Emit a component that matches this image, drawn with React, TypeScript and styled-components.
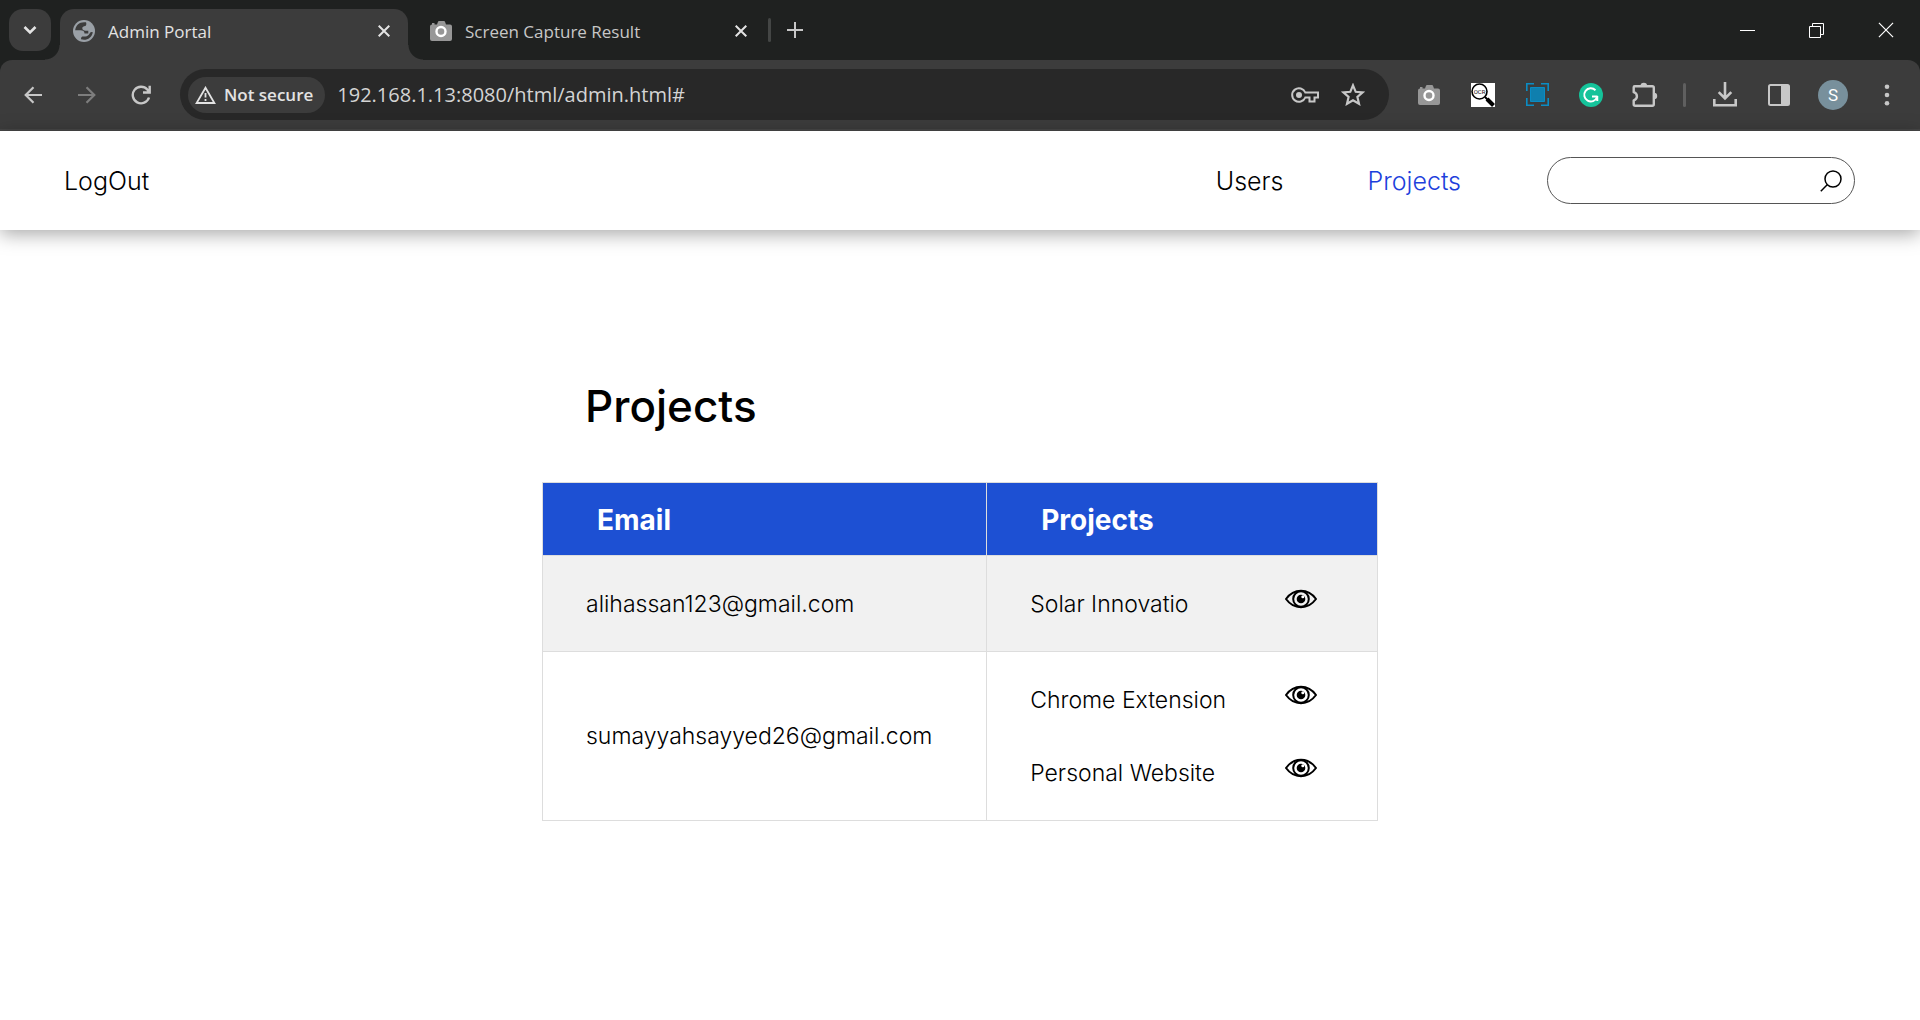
import React from "react";
import styled, { createGlobalStyle, css } from "styled-components";

const UI_FONT = `"Open Sans", "Noto Sans", sans-serif`;
const PAGE_FONT = `Inter, "Open Sans", sans-serif`;

const GlobalStyle = createGlobalStyle`
  *, *::before, *::after { box-sizing: border-box; }
  body { margin: 0; background: #fff; }
  button { border: 0; padding: 0; background: none; color: inherit; font: inherit; }
  svg { display: block; flex: none; }
`;

const Window = styled.div`
  min-height: 100vh;
  display: flex;
  flex-direction: column;
`;

/* ---------- tab strip ---------- */

const TabStrip = styled.div`
  display: flex;
  align-items: center;
  height: 60px;
  padding-left: 9px;
  background: #1f2120;
  color: #c7c7c7;
  font-family: ${UI_FONT};
`;

const TabSearch = styled.button`
  display: grid;
  place-items: center;
  width: 42px;
  height: 42px;
  margin-right: 9px;
  border-radius: 14px;
  background: #3c3c3c;
  color: #e3e3e3;
`;

const Tab = styled.div<{ $active?: boolean }>`
  position: relative;
  display: flex;
  align-items: center;
  width: 348px;
  height: 51px;
  align-self: flex-end;
  padding: 0 13px 8px;
  margin-right: ${(p) => (p.$active ? 9 : 3)}px;
  border-radius: 14px 14px 0 0;
  ${(p) =>
    p.$active &&
    css`
      background: #3c3c3c;
      color: #e3e3e3;
      &::before,
      &::after {
        content: "";
        position: absolute;
        bottom: 0;
        width: 15px;
        height: 15px;
      }
      &::before {
        right: 100%;
        background: radial-gradient(circle at 0 0, transparent 14px, #3c3c3c 15px);
      }
      &::after {
        left: 100%;
        background: radial-gradient(circle at 100% 0, transparent 14px, #3c3c3c 15px);
      }
    `}
`;

const TabTitle = styled.span`
  flex: 1;
  margin-left: 13px;
  padding-top: 2px;
  font-size: 17px;
  line-height: 24px;
  white-space: nowrap;
`;

const TabClose = styled.button`
  display: grid;
  place-items: center;
  width: 24px;
  height: 24px;
  margin-right: -1px;
  color: #e3e3e3;
`;

const Separator = styled.span`
  width: 3px;
  height: 24px;
  border-radius: 2px;
  background: #444645;
`;

const NewTab = styled.button`
  display: grid;
  place-items: center;
  width: 42px;
  height: 42px;
  margin-left: 3px;
`;

const WindowControls = styled.div`
  display: flex;
  margin-left: auto;
  color: #fff;
`;

const WindowButton = styled.button`
  display: grid;
  place-items: center;
  width: 69px;
  height: 58px;
`;

/* ---------- toolbar ---------- */

const ToolbarBack = styled.div`
  background: #1f2120;
`;

const Toolbar = styled.div`
  display: flex;
  align-items: center;
  height: 71px;
  padding: 0 6px;
  border-bottom: 2px solid #474747;
  border-radius: 12px 12px 0 0;
  background: #3c3c3c;
  color: #c7c7c7;
  font-family: ${UI_FONT};
`;

const ToolButton = styled.button<{ $dim?: boolean }>`
  display: grid;
  place-items: center;
  width: 54px;
  height: 54px;
  color: ${(p) => (p.$dim ? "#7d7d7d" : "#c7c7c7")};
`;

const ToolDivider = styled.span`
  width: 3px;
  height: 24px;
  margin: 0 12px 0 11px;
  border-radius: 2px;
  background: #5f5f5f;
`;

const Omnibox = styled.div`
  flex: 1;
  display: flex;
  align-items: center;
  height: 51px;
  margin: 0 13px 0 12px;
  padding: 0 12px 0 8px;
  border-radius: 26px;
  background: #282828;
`;

const SecurityChip = styled.button`
  display: flex;
  align-items: center;
  gap: 8px;
  height: 36px;
  padding: 0 12px 0 7px;
  border-radius: 18px;
  background: #3c3c3c;
  color: #e3e3e3;
  font-size: 17px;
  font-weight: 600;
  line-height: 24px;
`;

const Address = styled.input`
  flex: 1;
  min-width: 0;
  margin-left: 12px;
  padding: 0;
  border: 0;
  outline: 0;
  background: transparent;
  color: #d4d4d4;
  font-family: ${UI_FONT};
  font-size: 20px;
`;

const OmniButton = styled.button`
  display: grid;
  place-items: center;
  width: 48px;
  height: 48px;
`;

const Avatar = styled.span`
  display: grid;
  place-items: center;
  width: 30px;
  height: 30px;
  border-radius: 50%;
  background: #78909c;
  color: #fff;
  font-family: Roboto, sans-serif;
  font-size: 17px;
`;

/* ---------- page ---------- */

const PageHeader = styled.header`
  display: flex;
  align-items: center;
  height: 99px;
  padding: 0 65px 0 64px;
  background: #fff;
  box-shadow: 0 4px 18px rgba(0, 0, 0, 0.35);
  font-family: ${PAGE_FONT};
`;

const Nav = styled.nav`
  display: flex;
  gap: 84px;
  margin-left: auto;
  margin-right: 86px;
`;

const NavLink = styled.a<{ $current?: boolean }>`
  color: ${(p) => (p.$current ? "#1d3fdc" : "#000")};
  font-size: 25px;
  font-weight: 350;
  line-height: 36px;
  text-decoration: none;
`;

const SearchBox = styled.form`
  display: flex;
  align-items: center;
  width: 308px;
  height: 47px;
  padding: 0 12px 0 20px;
  border: 1px solid #555;
  border-radius: 24px;
`;

const SearchInput = styled.input`
  flex: 1;
  min-width: 0;
  border: 0;
  outline: 0;
  background: transparent;
  font-family: ${PAGE_FONT};
  font-size: 20px;
`;

const Main = styled.main`
  width: 836px;
  max-width: 100%;
  margin: 0 auto;
  padding: 144px 0 64px;
  font-family: ${PAGE_FONT};
  color: #000;
`;

const Title = styled.h1`
  margin: 0 0 44px;
  padding-left: 43px;
  font-size: 44px;
  font-weight: 500;
  line-height: 64px;
`;

const Table = styled.table`
  width: 100%;
  border-collapse: collapse;
  font-size: 23px;
  font-weight: 350;
  line-height: 32px;
`;

const HeadCell = styled.th<{ $width: string }>`
  width: ${(p) => p.$width};
  height: 73px;
  padding: 2px 54px 0;
  border: 1px solid #ddd;
  background: #1d50d3;
  color: #fff;
  font-size: 28px;
  font-weight: 700;
  text-align: left;
`;

const Row = styled.tr`
  &:nth-child(odd) {
    background: #f1f1f1;
  }
`;

const Cell = styled.td`
  padding: 11px 43px;
  border: 1px solid #ddd;
  white-space: nowrap;
`;

const ProjectList = styled.ul`
  margin: 0;
  padding: 0;
  list-style: none;
`;

const ProjectItem = styled.li`
  display: flex;
  align-items: center;
  justify-content: space-between;
  height: 73px;
  padding-right: 17px;
`;

const ViewButton = styled.button`
  display: block;
  height: 32px;
  margin-bottom: 10px;
`;

/* ---------- icons ---------- */

const CloseIcon = ({ size = 12, stroke = 2 }) => (
  <svg width={size} height={size} viewBox="0 0 12 12" fill="none" stroke="currentColor" strokeWidth={stroke}>
    <path d="M.7.7l10.6 10.6M11.3.7L.7 11.3" />
  </svg>
);

const GlobeIcon = () => (
  <svg width="22" height="22" viewBox="0 0 22 22">
    <circle cx="11" cy="11" r="11" fill="#9aa0a6" />
    <path
      fill="#3c3c3c"
      d="M13 2.300C7 1.300 2.500 5 2.200 10.300H7.500C10 10.300 11.500 11.500 11.500 13.500H15.300V10.800H12.500C10.500 10.800 9.300 9.800 9.300 8.300S10.500 6.200 12.300 6C13.300 5.500 13.700 4 13 2.300z"
    />
    <path
      fill="#3c3c3c"
      d="M8 19.300C13.500 21 18.700 18 19.800 12.500 18.800 11.800 17.500 12 16.800 13.200L15.800 14.800C14.800 16.200 13 16.500 11 16.500H9.300C8.300 17 8 18 8 19.300z"
    />
  </svg>
);

const CameraIcon = () => (
  <svg width="22" height="20" viewBox="0 0 22 20">
    <path
      fill="#979797"
      d="M2 3.500V2h2.500v1.500H7L8 .8C8.200.3 8.500 0 9 0h5c.5 0 .8.300 1 .8l1 2.700h4a2 2 0 0 1 2 2V18a2 2 0 0 1-2 2H2a2 2 0 0 1-2-2V5.500a2 2 0 0 1 2-2z"
    />
    <circle cx="11" cy="10.500" r="4.500" fill="#979797" stroke="#fff" strokeWidth="2.400" />
  </svg>
);

const EyeIcon = () => (
  <svg width="32" height="32" viewBox="0 0 32 32" fill="none" stroke="#000" strokeWidth="2">
    <path d="M1 16C5 10.500 10 7.800 16 7.800S27 10.500 31 16c-4 5.500-9 8.200-15 8.200S5 21.500 1 16z" />
    <circle cx="16" cy="16" r="7.800" />
    <circle cx="16" cy="16" r="4.300" fill="#000" stroke="none" />
    <circle cx="17.800" cy="13.800" r="1.500" fill="#fff" stroke="none" />
  </svg>
);

const rows = [
  { email: "alihassan123@gmail.com", projects: ["Solar Innovatio"] },
  { email: "sumayyahsayyed26@gmail.com", projects: ["Chrome Extension", "Personal Website"] },
];

const BrowserTabs = () => (
  <TabStrip>
    <TabSearch aria-label="Search tabs">
      <svg width="14" height="10" viewBox="0 0 14 10" fill="none" stroke="currentColor" strokeWidth="2.600">
        <path d="M1.500 2L7 7.500 12.500 2" />
      </svg>
    </TabSearch>
    <Tab $active>
      <GlobeIcon />
      <TabTitle>Admin Portal</TabTitle>
      <TabClose aria-label="Close Admin Portal">
        <CloseIcon />
      </TabClose>
    </Tab>
    <Tab>
      <CameraIcon />
      <TabTitle>Screen Capture Result</TabTitle>
      <TabClose aria-label="Close Screen Capture Result">
        <CloseIcon />
      </TabClose>
    </Tab>
    <Separator />
    <NewTab aria-label="New tab">
      <svg width="16" height="16" viewBox="0 0 16 16" stroke="currentColor" strokeWidth="2">
        <path d="M8 0v16M0 8h16" />
      </svg>
    </NewTab>
    <WindowControls>
      <WindowButton aria-label="Minimize">
        <svg width="15" height="15" viewBox="0 0 15 15" stroke="currentColor">
          <path d="M0 7.500h15" />
        </svg>
      </WindowButton>
      <WindowButton aria-label="Restore">
        <svg width="15" height="15" viewBox="0 0 15 15" fill="none" stroke="currentColor">
          <path d="M.5 3.500h11v11H.5zM3.500 3.500v-3h11v11h-3" />
        </svg>
      </WindowButton>
      <WindowButton aria-label="Close window">
        <CloseIcon size={16} stroke={0.9} />
      </WindowButton>
    </WindowControls>
  </TabStrip>
);

const BrowserToolbar = () => (
  <ToolbarBack>
    <Toolbar>
      <ToolButton aria-label="Back">
        <svg width="18" height="18" viewBox="0 0 18 18" fill="none" stroke="currentColor" strokeWidth="2.200">
          <path d="M18 9H2M9.500 1.200L1.700 9l7.800 7.800" />
        </svg>
      </ToolButton>
      <ToolButton aria-label="Forward" $dim>
        <svg width="18" height="18" viewBox="0 0 18 18" fill="none" stroke="currentColor" strokeWidth="2.200">
          <path d="M0 9h16M8.500 1.200L16.300 9l-7.800 7.800" />
        </svg>
      </ToolButton>
      <ToolButton aria-label="Reload">
        <svg width="20" height="20" viewBox="0 0 20 20" fill="none" stroke="currentColor" strokeWidth="2.400">
          <path d="M18 12.500A8.300 8.300 0 1 1 16.300 4.500L18.300 7M18.700.8V7.500H12" />
        </svg>
      </ToolButton>
      <Omnibox>
        <SecurityChip>
          <svg width="21" height="18" viewBox="0 0 21 18" fill="none" stroke="currentColor" strokeWidth="1.800">
            <path d="M10.500 1.700L19.400 17H1.600z" />
            <path d="M10.500 7v4.500M10.500 13v2" />
          </svg>
          Not secure
        </SecurityChip>
        <Address aria-label="Address" defaultValue="192.168.1.13:8080/html/admin.html#" />
        <OmniButton aria-label="Passwords">
          <svg width="28" height="16" viewBox="0 0 28 16" fill="none" stroke="currentColor" strokeWidth="2">
            <path d="M14.300 5.500A6.800 6.800 0 1 0 14.300 10.500H18.500V14.500H23.500V10.500H27V5.500z" />
            <circle cx="8" cy="8" r="3" fill="currentColor" stroke="none" />
          </svg>
        </OmniButton>
        <OmniButton aria-label="Bookmark">
          <svg width="24" height="23" viewBox="0 0 24 23" fill="none" stroke="currentColor" strokeWidth="2.200">
            <path d="M12 2.300l2.700 6.500 7 .6-5.300 4.600 1.600 6.800L12 17.200l-6 3.600 1.600-6.800-5.300-4.600 7-.6z" />
          </svg>
        </OmniButton>
      </Omnibox>
      <ToolButton aria-label="Screen capture">
        <CameraIcon />
      </ToolButton>
      <ToolButton aria-label="OCR">
        <svg width="24" height="24" viewBox="0 0 24 24">
          <path fill="#fff" d="M0 0h24v24H0z" />
          <circle cx="8.500" cy="8.500" r="7.500" fill="#fff" stroke="#000" strokeWidth="1.600" />
          <path d="M14 14l2.500 2.500" stroke="#000" strokeWidth="2" />
          <path d="M16 16l6.500 6.500" stroke="#000" strokeWidth="4" />
          <text x="8.500" y="10.800" fontSize="6" fontFamily="Roboto, sans-serif" textAnchor="middle" fill="#111">
            OCR
          </text>
        </svg>
      </ToolButton>
      <ToolButton aria-label="Capture area">
        <svg width="23" height="23" viewBox="0 0 23 23" fill="none" stroke="#0a8cc4" strokeWidth="1.600">
          <path d="M.8 8V.8H8M15 .8h7.200V8M22.200 15v7.200H15M8 22.200H.8V15" />
          <path fill="#0f7fae" stroke="#0a8cc4" strokeWidth="1" d="M4.500 4.500h14v14h-14z" />
        </svg>
      </ToolButton>
      <ToolButton aria-label="Grammar">
        <svg width="24" height="24" viewBox="0 0 24 24" fill="none">
          <circle cx="12" cy="12" r="12" fill="#15c39a" />
          <path d="M16.500 7.200A6.600 6.600 0 1 0 18 14.300M13 13.500h5.500M18.300 13v5" stroke="#fff" strokeWidth="1.900" />
        </svg>
      </ToolButton>
      <ToolButton aria-label="Extensions">
        <svg width="26" height="26" viewBox="0 0 26 26" fill="none" stroke="currentColor" strokeWidth="2.400">
          <path
            strokeLinejoin="round"
            d="M2.700 4.200H20.300Q21.800 4.200 21.800 5.700V22.300Q21.800 23.800 20.300 23.800H3.200Q1.700 23.800 1.700 22.300V18.300C6 17 6 11.500 1.700 10.200V5.200Q1.700 4.200 2.700 4.200z"
          />
          <path fill="currentColor" stroke="none" d="M8.500 4a3.300 3.300 0 0 1 6.600 0zM22 10.800a3.200 3.200 0 0 1 0 6.400z" />
        </svg>
      </ToolButton>
      <ToolDivider />
      <ToolButton aria-label="Downloads">
        <svg width="24" height="25" viewBox="0 0 24 25" fill="none" stroke="currentColor" strokeWidth="2.600">
          <path d="M12 0v16M5.700 10.200L12 16.500l6.300-6.300M1.300 17v6.200h21.400V17" />
        </svg>
      </ToolButton>
      <ToolButton aria-label="Side panel">
        <svg width="22" height="22" viewBox="0 0 22 22" fill="none" stroke="currentColor" strokeWidth="2">
          <rect x="1" y="1" width="20" height="20" rx="1.500" />
          <path fill="currentColor" stroke="none" d="M13 1h8v20h-8z" />
        </svg>
      </ToolButton>
      <ToolButton aria-label="Profile">
        <Avatar>S</Avatar>
      </ToolButton>
      <ToolButton aria-label="Menu">
        <svg width="6" height="22" viewBox="0 0 6 22" fill="currentColor">
          <circle cx="3" cy="2.700" r="2.300" />
          <circle cx="3" cy="11" r="2.300" />
          <circle cx="3" cy="19.300" r="2.300" />
        </svg>
      </ToolButton>
    </Toolbar>
  </ToolbarBack>
);

export default function App() {
  return (
    <Window>
      <GlobalStyle />
      <BrowserTabs />
      <BrowserToolbar />
      <PageHeader>
        <NavLink href="#logout">LogOut</NavLink>
        <Nav>
          <NavLink href="#users">Users</NavLink>
          <NavLink href="#projects" $current>
            Projects
          </NavLink>
        </Nav>
        <SearchBox onSubmit={(e) => e.preventDefault()}>
          <SearchInput type="text" aria-label="Search" />
          <button aria-label="Submit search">
            <svg width="22" height="22" viewBox="0 0 22 22" fill="none" stroke="#000" strokeWidth="1.500">
              <circle cx="13" cy="9" r="8" />
              <path d="M7.200 14.800L.8 21.200" />
            </svg>
          </button>
        </SearchBox>
      </PageHeader>
      <Main>
        <Title>Projects</Title>
        <Table>
          <thead>
            <tr>
              <HeadCell $width="53.200%">Email</HeadCell>
              <HeadCell $width="46.800%">Projects</HeadCell>
            </tr>
          </thead>
          <tbody>
            {rows.map((row) => (
              <Row key={row.email}>
                <Cell>{row.email}</Cell>
                <Cell>
                  <ProjectList>
                    {row.projects.map((name) => (
                      <ProjectItem key={name}>
                        {name}
                        <ViewButton aria-label={`View ${name}`}>
                          <EyeIcon />
                        </ViewButton>
                      </ProjectItem>
                    ))}
                  </ProjectList>
                </Cell>
              </Row>
            ))}
          </tbody>
        </Table>
      </Main>
    </Window>
  );
}
